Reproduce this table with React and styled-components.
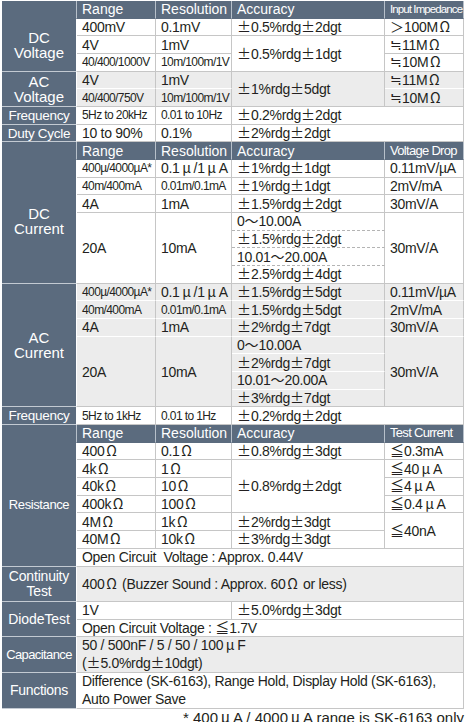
import React from 'react';
import styled, { createGlobalStyle } from 'styled-components';

const SLATE = '#5b6b7e';
const RULE = '#c6c6c6';
const SHADE = '#ececec';

const GlobalStyle = createGlobalStyle`
  body {
    margin: 0;
    background: #fff;
    color: #231f20;
    font-family: "Liberation Sans", "Noto Sans CJK JP", sans-serif;
  }
`;

const Sheet = styled.div`
  width: 464px;
  padding: 1px 0 0 2px;
`;

const SpecTable = styled.table`
  width: 462px;
  border-collapse: separate;
  border-spacing: 0;
  table-layout: fixed;
`;

const Col = styled.col`
  width: ${(p) => p.$w}px;
`;

const Row = styled.tr`
  height: ${(p) => (p.$tall ? '35.35px' : '17.675px')};
`;

const Head = styled.th`
  box-sizing: border-box;
  padding: 0 0 0 5px;
  background: ${SLATE};
  color: #fff;
  font-weight: normal;
  font-size: ${(p) => p.$fs || 14}px;
  letter-spacing: ${(p) => p.$ls || 0}px;
  line-height: 16px;
  text-align: left;
  white-space: nowrap;
  border-right: 1px solid #b7c0ca;
  border-bottom: 1px solid ${SLATE};
`;

const Label = styled.th`
  box-sizing: border-box;
  padding: 0;
  background: ${SLATE};
  color: #fff;
  font-weight: normal;
  font-size: ${(p) => p.$fs || 15}px;
  letter-spacing: ${(p) => p.$ls || 0}px;
  line-height: 15px;
  text-align: center;
  white-space: nowrap;
  border-right: 1px solid #fff;
  border-bottom: 1px solid #c3cad2;
`;

const lineColor = { gray: RULE, white: '#fff', dashed: '#b4b4b4' };

const Cell = styled.td`
  box-sizing: border-box;
  padding: 0 0 0 5px;
  background: ${(p) => (p.$shade ? SHADE : '#fff')};
  font-size: ${(p) => (p.$narrow ? 12 : 14)}px;
  letter-spacing: ${(p) => (p.$narrow ? -0.6 : -0.3)}px;
  line-height: ${(p) => p.$lh || 16}px;
  white-space: nowrap;
  border-right: 1px solid ${RULE};
  border-bottom: 1px ${(p) => (p.$line === 'dashed' ? 'dashed' : 'solid')}
    ${(p) => lineColor[p.$line || 'gray']};
`;

const Wide = styled.span`
  font-family: "Noto Sans CJK JP", sans-serif;
  font-feature-settings: "fwid" 1;
  line-height: 1;
  letter-spacing: 0;
`;

const Greek = styled(Wide)`
  display: inline-block;
  width: 1em;
  text-align: center;
`;

const Footnote = styled.div`
  padding: 0 2px 0 0;
  font-size: 15px;
  line-height: 17px;
  text-align: right;
`;

const WIDE = /([±≒≦～＞Ωμ])/;

const w = (s) =>
  s.split(WIDE).map((part, i) => {
    if (part.length !== 1 || !WIDE.test(part)) return part;
    return part === 'Ω' || part === 'μ' ? (
      <Greek key={i}>{part}</Greek>
    ) : (
      <Wide key={i}>{part}</Wide>
    );
  });

const App = () => (
  <Sheet>
    <GlobalStyle />
    <SpecTable>
      <colgroup>
        <Col $w={75} />
        <Col $w={79} />
        <Col $w={76} />
        <Col $w={153} />
        <Col $w={79} />
      </colgroup>
      <tbody>
        {/* voltage */}
        <Row>
          <Head />
          <Head>Range</Head>
          <Head>Resolution</Head>
          <Head>Accuracy</Head>
          <Head $fs={11.5} $ls={-0.9}>Input Impedance</Head>
        </Row>
        <Row>
          <Label rowSpan={3}>DC<br />Voltage</Label>
          <Cell>400mV</Cell>
          <Cell>0.1mV</Cell>
          <Cell>{w('±0.5%rdg±2dgt')}</Cell>
          <Cell>{w('＞100MΩ')}</Cell>
        </Row>
        <Row>
          <Cell>4V</Cell>
          <Cell>1mV</Cell>
          <Cell rowSpan={2}>{w('±0.5%rdg±1dgt')}</Cell>
          <Cell>{w('≒11MΩ')}</Cell>
        </Row>
        <Row>
          <Cell $narrow>40/400/1000V</Cell>
          <Cell $narrow>10m/100m/1V</Cell>
          <Cell>{w('≒10MΩ')}</Cell>
        </Row>
        <Row>
          <Label rowSpan={2}>AC<br />Voltage</Label>
          <Cell $shade $line="white">4V</Cell>
          <Cell $shade $line="white">1mV</Cell>
          <Cell $shade rowSpan={2}>{w('±1%rdg±5dgt')}</Cell>
          <Cell $shade $line="white">{w('≒11MΩ')}</Cell>
        </Row>
        <Row>
          <Cell $shade $narrow>40/400/750V</Cell>
          <Cell $shade $narrow>10m/100m/1V</Cell>
          <Cell $shade>{w('≒10MΩ')}</Cell>
        </Row>
        <Row>
          <Label $fs={13.5} $ls={-0.3}>Frequency</Label>
          <Cell $narrow>5Hz to 20kHz</Cell>
          <Cell $narrow>0.01 to 10Hz</Cell>
          <Cell colSpan={2}>{w('±0.2%rdg±2dgt')}</Cell>
        </Row>
        <Row>
          <Label $fs={13.5} $ls={-0.3}>Duty Cycle</Label>
          <Cell>10 to 90%</Cell>
          <Cell>0.1%</Cell>
          <Cell colSpan={2}>{w('±2%rdg±2dgt')}</Cell>
        </Row>

        {/* DC current */}
        <Row>
          <Head />
          <Head>Range</Head>
          <Head>Resolution</Head>
          <Head>Accuracy</Head>
          <Head $fs={13} $ls={-0.7}>Voltage Drop</Head>
        </Row>
        <Row>
          <Label rowSpan={7}>DC<br />Current</Label>
          <Cell $narrow>400µ/4000µA*</Cell>
          <Cell>{w('0.1μ/1μA')}</Cell>
          <Cell>{w('±1%rdg±1dgt')}</Cell>
          <Cell>0.11mV/µA</Cell>
        </Row>
        <Row>
          <Cell $narrow>40m/400mA</Cell>
          <Cell $narrow>0.01m/0.1mA</Cell>
          <Cell>{w('±1%rdg±1dgt')}</Cell>
          <Cell>2mV/mA</Cell>
        </Row>
        <Row>
          <Cell>4A</Cell>
          <Cell>1mA</Cell>
          <Cell>{w('±1.5%rdg±2dgt')}</Cell>
          <Cell>30mV/A</Cell>
        </Row>
        <Row>
          <Cell rowSpan={4}>20A</Cell>
          <Cell rowSpan={4}>10mA</Cell>
          <Cell $line="dashed">{w('0～10.00A')}</Cell>
          <Cell rowSpan={4}>30mV/A</Cell>
        </Row>
        <Row>
          <Cell $line="dashed">{w('±1.5%rdg±2dgt')}</Cell>
        </Row>
        <Row>
          <Cell $line="dashed">{w('10.01～20.00A')}</Cell>
        </Row>
        <Row>
          <Cell>{w('±2.5%rdg±4dgt')}</Cell>
        </Row>

        {/* AC current */}
        <Row>
          <Label rowSpan={7}>AC<br />Current</Label>
          <Cell $shade $line="white" $narrow>400µ/4000µA*</Cell>
          <Cell $shade $line="white">{w('0.1μ/1μA')}</Cell>
          <Cell $shade $line="white">{w('±1.5%rdg±5dgt')}</Cell>
          <Cell $shade $line="white">0.11mV/µA</Cell>
        </Row>
        <Row>
          <Cell $shade $line="white" $narrow>40m/400mA</Cell>
          <Cell $shade $line="white" $narrow>0.01m/0.1mA</Cell>
          <Cell $shade $line="white">{w('±1.5%rdg±5dgt')}</Cell>
          <Cell $shade $line="white">2mV/mA</Cell>
        </Row>
        <Row>
          <Cell $shade $line="white">4A</Cell>
          <Cell $shade $line="white">1mA</Cell>
          <Cell $shade $line="white">{w('±2%rdg±7dgt')}</Cell>
          <Cell $shade $line="white">30mV/A</Cell>
        </Row>
        <Row>
          <Cell $shade rowSpan={4}>20A</Cell>
          <Cell $shade rowSpan={4}>10mA</Cell>
          <Cell $shade $line="white">{w('0～10.00A')}</Cell>
          <Cell $shade rowSpan={4}>30mV/A</Cell>
        </Row>
        <Row>
          <Cell $shade $line="white">{w('±2%rdg±7dgt')}</Cell>
        </Row>
        <Row>
          <Cell $shade $line="white">{w('10.01～20.00A')}</Cell>
        </Row>
        <Row>
          <Cell $shade>{w('±3%rdg±7dgt')}</Cell>
        </Row>
        <Row>
          <Label $fs={13.5} $ls={-0.3}>Frequency</Label>
          <Cell $narrow>5Hz to 1kHz</Cell>
          <Cell $narrow>0.01 to 1Hz</Cell>
          <Cell colSpan={2}>{w('±0.2%rdg±2dgt')}</Cell>
        </Row>

        {/* resistance */}
        <Row>
          <Head />
          <Head>Range</Head>
          <Head>Resolution</Head>
          <Head>Accuracy</Head>
          <Head $fs={13} $ls={-0.7}>Test Current</Head>
        </Row>
        <Row>
          <Label rowSpan={7} $fs={13} $ls={-0.4}>Resistance</Label>
          <Cell>{w('400Ω')}</Cell>
          <Cell>{w('0.1Ω')}</Cell>
          <Cell>{w('±0.8%rdg±3dgt')}</Cell>
          <Cell>{w('≦0.3mA')}</Cell>
        </Row>
        <Row>
          <Cell>{w('4kΩ')}</Cell>
          <Cell>{w('1Ω')}</Cell>
          <Cell rowSpan={3}>{w('±0.8%rdg±2dgt')}</Cell>
          <Cell>{w('≦40μA')}</Cell>
        </Row>
        <Row>
          <Cell>{w('40kΩ')}</Cell>
          <Cell>{w('10Ω')}</Cell>
          <Cell>{w('≦4μA')}</Cell>
        </Row>
        <Row>
          <Cell>{w('400kΩ')}</Cell>
          <Cell>{w('100Ω')}</Cell>
          <Cell>{w('≦0.4μA')}</Cell>
        </Row>
        <Row>
          <Cell>{w('4MΩ')}</Cell>
          <Cell>{w('1kΩ')}</Cell>
          <Cell>{w('±2%rdg±3dgt')}</Cell>
          <Cell rowSpan={2}>{w('≦40nA')}</Cell>
        </Row>
        <Row>
          <Cell>{w('40MΩ')}</Cell>
          <Cell>{w('10kΩ')}</Cell>
          <Cell>{w('±3%rdg±3dgt')}</Cell>
        </Row>
        <Row>
          <Cell colSpan={4}>Open Circuit&nbsp; Voltage : Approx. 0.44V</Cell>
        </Row>

        {/* other functions */}
        <Row $tall>
          <Label $fs={14} $ls={-0.2}>Continuity<br />Test</Label>
          <Cell $shade colSpan={4}>{w('400Ω (Buzzer Sound : Approx. 60Ω or less)')}</Cell>
        </Row>
        <Row>
          <Label rowSpan={2} $fs={14} $ls={-0.1}>DiodeTest</Label>
          <Cell colSpan={2}>1V</Cell>
          <Cell colSpan={2}>{w('±5.0%rdg±3dgt')}</Cell>
        </Row>
        <Row>
          <Cell colSpan={4}>{w('Open Circuit Voltage : ≦1.7V')}</Cell>
        </Row>
        <Row $tall>
          <Label $fs={13} $ls={-0.6}>Capacitance</Label>
          <Cell $shade colSpan={4} $lh={17.5}>
            {w('50 / 500nF / 5 / 50 / 100μF')}
            <br />
            {w('(±5.0%rdg±10dgt)')}
          </Cell>
        </Row>
        <Row $tall>
          <Label $fs={14} $ls={-0.3}>Functions</Label>
          <Cell colSpan={4} $lh={17.5}>
            Difference (SK-6163), Range Hold, Display Hold (SK-6163),
            <br />
            Auto Power Save
          </Cell>
        </Row>
      </tbody>
    </SpecTable>
    <Footnote>{w('* 400μA / 4000μA range is SK-6163 only')}</Footnote>
  </Sheet>
);

export default App;
